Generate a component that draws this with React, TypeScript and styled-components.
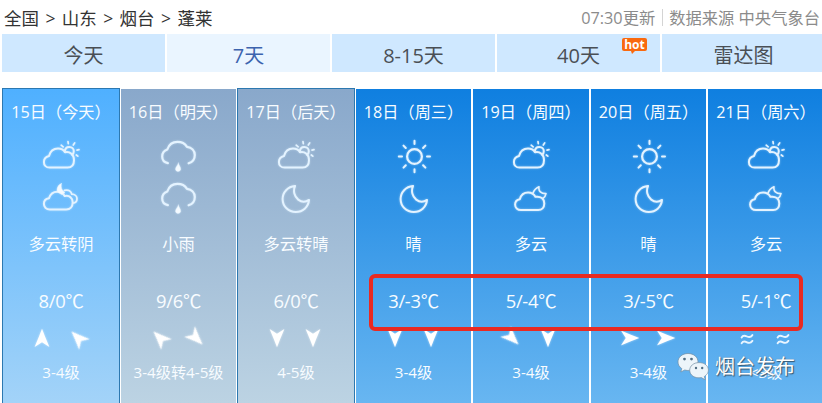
import styled, { createGlobalStyle, css } from 'styled-components';

const GlobalStyle = createGlobalStyle`
  * {
    box-sizing: border-box;
  }

  body {
    margin: 0;
    background: #fff;
    overflow: hidden;
    font-family: 'Open Sans', 'Noto Sans CJK SC', sans-serif;
  }
`;

const Page = styled.div`
  position: relative;
  width: 822px;
  height: 403px;
  overflow: hidden;
  background: #fff;
`;

const TopBar = styled.header`
  display: flex;
  justify-content: space-between;
  align-items: center;
  height: 34px;
  padding: 1px 2px 0 4px;
  white-space: nowrap;
`;

const Breadcrumb = styled.nav`
  display: flex;
  gap: 6.4px;
  font-size: 17.5px;
  line-height: 34px;
  color: #333;
`;

const Source = styled.div`
  display: flex;
  align-items: center;
  font-size: 16.3px;
  line-height: 34px;
  color: #8b8b8b;
`;

const Divider = styled.span`
  width: 1px;
  height: 17px;
  margin: 0 6px 0 7px;
  background: #d4d4d4;
`;

const Tabs = styled.div`
  display: flex;
  gap: 2px;
  padding-left: 2px;
`;

const Tab = styled.div<{ $active?: boolean }>`
  position: relative;
  flex: 0 0 163px;
  height: 38px;
  line-height: 44px;
  font-size: 20px;
  text-align: center;
  color: ${({ $active }) => ($active ? '#3c63ae' : '#4a4f55')};
  background: ${({ $active }) => ($active ? '#eaf5ff' : '#cfe8ff')};
`;

const HotBadge = styled.span`
  position: absolute;
  top: 4px;
  left: 125px;
  width: 25px;
  height: 13px;
  border-radius: 2px;
  background: #f9690f;
  color: #fff;
  font: bold 12px/13px 'Open Sans', sans-serif;

  &::after {
    content: '';
    position: absolute;
    left: 9px;
    top: 13px;
    border: solid transparent;
    border-width: 3px 3px 0 1px;
    border-top-color: #f9690f;
  }
`;

const Week = styled.div`
  display: grid;
  grid-template-columns: 119px 116px 119px 117px 118px 117px 116px;
  height: 315px;
  margin-top: 16px;
  padding-left: 2px;
`;

type Tone = 'today' | 'past' | 'clear';

const tones: Record<Tone, string> = {
  today: 'linear-gradient(#4fb0ff, #a3d3f8)',
  past: 'linear-gradient(#89a8cb, #bcd3e3)',
  clear: 'linear-gradient(#0f7fe0, #68b6f1)',
};

const Day = styled.section<{ $tone: Tone; $outlined?: boolean; $gap: number }>`
  display: flex;
  flex-direction: column;
  align-items: center;
  margin-right: ${({ $gap }) => $gap}px;
  background: ${({ $tone }) => tones[$tone]};
  color: #f8fcff;
  white-space: nowrap;
  ${({ $outlined }) =>
    $outlined
      ? css`
          border: 1px solid #2c78b0;
          border-bottom: 0;
        `
      : css`
          margin-top: 1px;
        `}
`;

const DateLabel = styled.div`
  height: 49px;
  font-size: 16.2px;
  line-height: 46px;
`;

const Sky = styled.svg`
  display: block;
  flex: none;
  width: 40px;
  height: 34px;
  margin: 2px 0 6px;
  overflow: visible;
  fill: none;
  stroke: #e4f3ff;
  stroke-width: 2;
  stroke-linecap: round;
  stroke-linejoin: round;
  filter: drop-shadow(0 0 1px rgba(225, 243, 255, 0.45));
`;

const Condition = styled.div`
  height: 28px;
  margin-top: 9px;
  font-size: 16.3px;
  line-height: 26px;
`;

const Temperature = styled.div`
  height: 30px;
  margin-top: 27px;
  font-size: 18.4px;
  line-height: 30px;
  letter-spacing: -0.3px;
`;

const WindRow = styled.div`
  display: flex;
  gap: 18px;
  height: 20px;
  margin: 12px 2px 0 0;
`;

const Arrow = styled.svg<{ $angle: number }>`
  width: 18px;
  height: 20px;
  overflow: visible;
  fill: #fff;
  transform: rotate(${({ $angle }) => $angle}deg);
  filter: drop-shadow(0 0 1px rgba(255, 255, 255, 0.55));
`;

const Wave = styled.svg`
  width: 18px;
  height: 20px;
  fill: none;
  stroke: #e9f5ff;
  stroke-width: 1.9;
  stroke-linecap: round;
`;

const WindForce = styled.div`
  margin-top: 12px;
  font-size: 15.2px;
  line-height: 24px;
`;

const Highlight = styled.div`
  position: absolute;
  left: 369px;
  top: 274px;
  width: 434px;
  height: 57px;
  border: 4px solid #e92a22;
  border-radius: 6px;
`;

const Watermark = styled.div`
  position: absolute;
  left: 677px;
  top: 351px;
  display: flex;
  align-items: center;
  gap: 5px;
  height: 32px;
  color: #fff;
  font-size: 20px;
  line-height: 30px;
  white-space: nowrap;
  text-shadow: 1px 1px 1px #34556f, 0 0 1px #5b7f9c;
`;

type SkyKind = 'cloudSun' | 'cloudMoon' | 'overcastNight' | 'rain' | 'sun' | 'moon';

function SkyIcon({ kind }: { kind: SkyKind }) {
  switch (kind) {
    case 'cloudSun':
      return (
        <Sky viewBox="0 0 40 34">
          <path d="M8.6 27.6C4.8 27.6 2.9 24.8 2.9 21.9C2.9 18.8 5 16.8 8 16C9.3 11.2 12.8 8.6 17 8.6C20.3 8.6 22.6 10 24 12.3C29 11.1 33 14.9 33 20C33 25 30.4 27.6 26.6 27.6Z" />
          <path d="M23.8 11.8C23.9 8.7 25.9 7 28.3 7C31 7 32.8 8.9 32.8 11.2C32.8 12.6 32.3 13.8 31.2 14.7" />
          <path d="M20.2 5.2L22.2 6.8M27 1.6L27.3 3.6M33.7 2.9L32.3 5M36 10.1L38 9.7M35.3 15L36.8 16.2" strokeWidth="1.7" />
        </Sky>
      );
    case 'cloudMoon':
      return (
        <Sky viewBox="0 0 40 34">
          <path d="M10 28C6.4 28 4.1 25.6 4.1 22.6C4.1 19.7 6 17.7 8.8 17.2C10.1 12.8 13.3 10.6 17.1 10.6C20.4 10.6 23 12.2 24.4 14.8C29.8 13.9 33.3 16.9 33.3 21.4C33.3 25.4 30.8 28 27.2 28Z" />
          <path d="M22 11C23.1 8 25.2 6 28 4.8C27.2 9 30 11.7 35 11.6C34.5 13.8 33.7 15.3 32.3 16.2" strokeWidth="1.6" />
        </Sky>
      );
    case 'overcastNight':
      return (
        <Sky viewBox="0 0 40 34">
          <path d="M8.9 27.5C5.1 27.5 2.9 25 2.9 21.8C2.9 18.8 5 16.8 8 16.3C9.3 12 12.6 9.7 16.4 9.7C19.8 9.7 22.4 11.4 23.7 14.1C28.5 13 31.7 16.1 31.7 20.3C31.7 24.7 29.1 27.5 25.3 27.5Z" />
          <path d="M23.4 8.4C27.6 7.3 30.2 9.2 30.8 12.2C34 12.2 36 14.3 36 16.7C36 19.1 34.5 20.8 31.8 21.2" strokeWidth="1.8" />
          <path d="M20.4 1.6C19.6 5.4 20.8 8.7 24 10.6L20.8 12.6L16.4 10C15.3 6.5 17.1 2.9 20.4 1.6Z" fill="#f4faff" strokeWidth="0.5" />
        </Sky>
      );
    case 'rain':
      return (
        <Sky viewBox="1.2 0 40 34">
          <path d="M10.1 23.1C6.3 22.4 4.4 19.5 4.4 16.5C4.4 13.1 6.6 10.5 9.5 9.5C11.2 4.4 15 1.9 19.7 1.9C23.9 1.9 27.2 3.6 29.2 6.8C33.8 7.4 37 10.6 37 15C37 19 34.8 22.1 30.8 23.3" strokeWidth="2.2" />
          <path d="M20.6 23C19.9 25.4 17.7 27.2 17.7 29C17.7 30.5 18.8 31.4 20.2 31.4C21.8 31.4 22.9 30.5 22.9 28.9C22.9 27 21 25.2 20.6 23Z" fill="#f4faff" strokeWidth="0.4" />
        </Sky>
      );
    case 'sun':
      return (
        <Sky viewBox="0 0 40 34">
          <circle cx="20.5" cy="16.5" r="7.4" strokeWidth="2.2" />
          <path d="M20.5 0.8V4M20.5 29.2V32.3M4.8 16.5H8M33 16.5H36M9.5 5.6L11.8 8M31.4 5.6L29.1 8M9.5 27.6L11.8 25.2M31.4 27.6L29.1 25.2" />
        </Sky>
      );
    case 'moon':
      return (
        <Sky viewBox="0 0 40 34">
          <path d="M19 4C11.8 4.6 6.6 10.3 6.6 17C6.6 24.5 12.5 30 19.8 30C26.7 30 32.4 25.2 33 17.9C29.8 20.1 25.5 20.2 22.2 17.6C18.3 14.5 16.9 9 19 4Z" />
        </Sky>
      );
  }
}

function WindMark({ angle }: { angle: number | null }) {
  if (angle === null) {
    return (
      <Wave viewBox="0 0 18 20">
        <path d="M3.6 9.4C5.2 6.7 7 7.5 9 8.5S12.8 9.5 14.4 7.1M3.6 15.2C5.2 12.5 7 13.3 9 14.3S12.8 15.3 14.4 12.9" />
      </Wave>
    );
  }
  return (
    <Arrow $angle={angle} viewBox="0 0 18 20">
      <path d="M9 0.8L12.2 9L16.4 19L9 14.2L1.6 19L5.8 9Z" />
    </Arrow>
  );
}

interface Forecast {
  date: string;
  tone: Tone;
  outlined?: boolean;
  gap: number;
  sky: [SkyKind, SkyKind];
  condition: string;
  temperature: string;
  wind: [number | null, number | null];
  force: string;
}

const forecasts: Forecast[] = [
  { date: '15日（今天）', tone: 'today', outlined: true, gap: 1, sky: ['cloudSun', 'overcastNight'], condition: '多云转阴', temperature: '8/0℃', wind: [0, -45], force: '3-4级' },
  { date: '16日（明天）', tone: 'past', gap: 1, sky: ['rain', 'rain'], condition: '小雨', temperature: '9/6℃', wind: [-45, 135], force: '3-4级转4-5级' },
  { date: '17日（后天）', tone: 'past', outlined: true, gap: 1, sky: ['cloudSun', 'moon'], condition: '多云转晴', temperature: '6/0℃', wind: [180, 180], force: '4-5级' },
  { date: '18日（周三）', tone: 'clear', gap: 2, sky: ['sun', 'moon'], condition: '晴', temperature: '3/-3℃', wind: [180, 180], force: '3-4级' },
  { date: '19日（周四）', tone: 'clear', gap: 2, sky: ['cloudSun', 'cloudMoon'], condition: '多云', temperature: '5/-4℃', wind: [135, 180], force: '3-4级' },
  { date: '20日（周五）', tone: 'clear', gap: 2, sky: ['sun', 'moon'], condition: '晴', temperature: '3/-5℃', wind: [90, 90], force: '3-4级' },
  { date: '21日（周六）', tone: 'clear', gap: 0, sky: ['cloudSun', 'cloudMoon'], condition: '多云', temperature: '5/-1℃', wind: [null, null], force: '<3级' },
];

const places = ['全国', '>', '山东', '>', '烟台', '>', '蓬莱'];

function WechatLogo() {
  return (
    <svg width="33" height="30" viewBox="0 0 33 30">
      <path
        d="M11 1.5C5.2 1.5 1 5.3 1 9.9C1 12.7 2.4 15 4.8 16.6L3.8 20L7.7 18C14 20 21 15.6 21 9.9C21 5.1 16.8 1.5 11 1.5Z"
        fill="#edf5fa"
        stroke="#718da2"
        strokeWidth="0.7"
      />
      <path
        d="M22 10.6C16.6 10.6 12.7 14 12.7 18.3C12.7 23.3 18 26.8 24.3 25.6L28.3 27.8L27.3 24.5C34.8 19.9 31.5 10.6 22 10.6Z"
        fill="#edf5fa"
        stroke="#718da2"
        strokeWidth="0.7"
      />
      <g fill="#526f84">
        <circle cx="7.5" cy="7.1" r="1.4" />
        <circle cx="14.5" cy="7.1" r="1.4" />
        <circle cx="19" cy="16" r="1.2" />
        <circle cx="25.2" cy="16" r="1.2" />
      </g>
    </svg>
  );
}

export default function App() {
  return (
    <Page>
      <GlobalStyle />
      <TopBar>
        <Breadcrumb>
          {places.map((place, i) => (
            <span key={i}>{place}</span>
          ))}
        </Breadcrumb>
        <Source>
          07:30更新
          <Divider />
          数据来源 中央气象台
        </Source>
      </TopBar>

      <Tabs>
        <Tab>今天</Tab>
        <Tab $active>7天</Tab>
        <Tab>8-15天</Tab>
        <Tab>
          40天
          <HotBadge>hot</HotBadge>
        </Tab>
        <Tab>雷达图</Tab>
      </Tabs>

      <Week>
        {forecasts.map((day) => (
          <Day key={day.date} $tone={day.tone} $outlined={day.outlined} $gap={day.gap}>
            <DateLabel>{day.date}</DateLabel>
            <SkyIcon kind={day.sky[0]} />
            <SkyIcon kind={day.sky[1]} />
            <Condition>{day.condition}</Condition>
            <Temperature>{day.temperature}</Temperature>
            <WindRow>
              <WindMark angle={day.wind[0]} />
              <WindMark angle={day.wind[1]} />
            </WindRow>
            <WindForce>{day.force}</WindForce>
          </Day>
        ))}
      </Week>

      <Highlight />
      <Watermark>
        <WechatLogo />
        烟台发布
      </Watermark>
    </Page>
  );
}
